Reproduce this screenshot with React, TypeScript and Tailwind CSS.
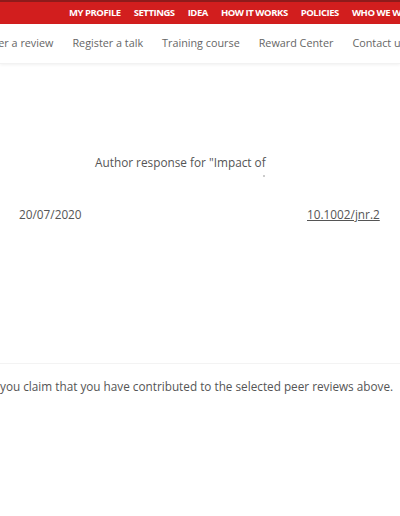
import React from 'react';

const topLinks = ['My profile', 'Settings', 'Idea', 'How it works', 'Policies', 'Who we work with'];
const mainLinks = ['Register a review', 'Register a talk', 'Training course', 'Reward Center', 'Contact us'];

const App: React.FC = () => {
  return (
    <div
      className="w-[400px] h-[516px] overflow-hidden bg-white text-[#555]"
      style={{ fontFamily: '"Open Sans", "Liberation Sans", sans-serif' }}
    >
      <div className="h-[24px] bg-[#d21e1e] border-t-2 border-[#8e1b1b] flex items-center overflow-hidden">
        <nav className="flex gap-[13px] ml-[69px] whitespace-nowrap">
          {topLinks.map((link) => (
            <span key={link} className="text-[9.5px] font-bold uppercase text-white tracking-[-0.45px]">
              {link}
            </span>
          ))}
        </nav>
      </div>

      <div className="h-[40px] flex items-center overflow-hidden shadow-[0_1px_3px_rgba(0,0,0,0.06)] border-b border-[#f2f2f2]">
        <nav className="flex gap-[19px] -ml-[32px] whitespace-nowrap text-[10.8px] text-[#666]">
          {mainLinks.map((link) => (
            <span key={link}>{link}</span>
          ))}
        </nav>
      </div>

      <div className="pt-[89px] text-[11.8px]">
        <div className="pl-[95px] h-[18px] leading-[18px]">Author response for "Impact of</div>
        <div className="pl-[263px] h-[10px] flex items-center">
          <span className="w-[2px] h-[2px] bg-[#bbb] rounded-full" />
        </div>
        <div className="mt-[25px] flex items-center h-[18px]">
          <span className="pl-[19px] w-[307px]">20/07/2020</span>
          <span className="underline text-[#555]">10.1002/jnr.2</span>
        </div>
      </div>

      <div className="mt-[139px] border-t border-[#f3f3f3] pt-[13px]">
        <p className="text-[11.75px] whitespace-nowrap leading-[18px]">
          you claim that you have contributed to the selected peer reviews above.
        </p>
      </div>
    </div>
  );
};

export default App;
